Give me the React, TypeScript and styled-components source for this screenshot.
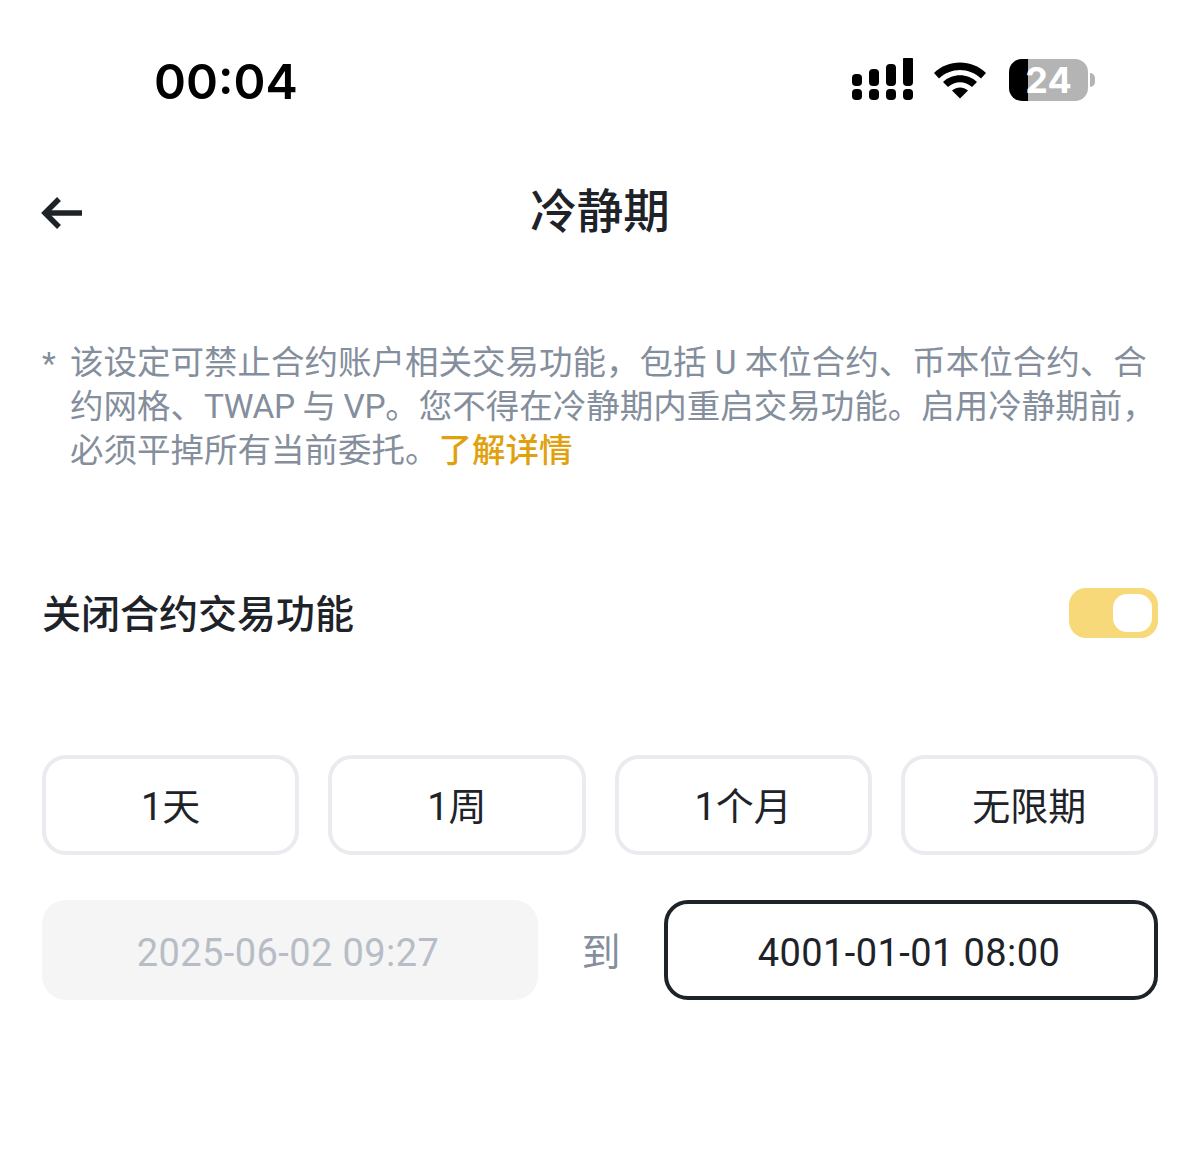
import React from "react";
import styled, { createGlobalStyle } from "styled-components";

const GlobalStyle = createGlobalStyle`
  html, body {
    margin: 0;
    padding: 0;
    background: #fff;
  }
  body {
    font-family: "Roboto", "Noto Sans CJK SC", sans-serif;
    color: #1e2329;
  }
`;

const periods = ["1天", "1周", "1个月", "无限期"];

function SignalIcon() {
  const heights = [12, 17, 22, 30];
  return (
    <svg width="62" height="44" viewBox="0 0 62 44" fill="#000">
      {heights.map((h, i) => (
        <rect key={i} x={1 + i * 17} y={28 - h} width="10" height={h} rx="4" />
      ))}
      {heights.map((_, i) => (
        <rect key={i} x={1 + i * 17} y="31" width="10" height="11" rx="4" />
      ))}
    </svg>
  );
}

function WifiIcon() {
  return (
    <svg width="54" height="40" viewBox="0 0 54 40" fill="#000">
      <path d="M1 13 C15 -1 39 -1 53 13 L48 18.500 C36 7 18 7 6 18.500 Z" />
      <path d="M10 22 C19 13 35 13 44 22 L39 27 C32 20.500 22 20.500 15 27 Z" />
      <path d="M19 30.500 C24 26.500 30 26.500 35 30.500 L27 38.500 Z" />
    </svg>
  );
}

export default function App() {
  return (
    <Page>
      <GlobalStyle />
      <StatusBar>
        <Clock>00:04</Clock>
        <StatusIcons>
          <SignalIcon />
          <WifiIcon />
          <Battery>
            <BatteryBody>
              <BatteryLevel>24</BatteryLevel>
            </BatteryBody>
            <BatteryCap />
          </Battery>
        </StatusIcons>
      </StatusBar>

      <Header>
        <BackButton>
          <svg width="44" height="36" viewBox="0 0 44 36" fill="none" stroke="#1e2329" strokeWidth="5.500">
            <path d="M42 18 H6" />
            <path d="M19 4 L5 18 L19 32" />
          </svg>
        </BackButton>
        <Title>冷静期</Title>
      </Header>

      <Notice>
        <Star>*</Star>
        <NoticeText>
          该设定可禁止合约账户相关交易功能，包括 U 本位合约、币本位合约、合约网格、<Latin>TWAP 与 VP</Latin>。您不得在冷静期内重启交易功能。启用冷静期前，必须平掉所有当前委托。
          <LearnMore>了解详情</LearnMore>
        </NoticeText>
      </Notice>

      <ToggleRow>
        <ToggleLabel>关闭合约交易功能</ToggleLabel>
        <Toggle>
          <ToggleKnob />
        </Toggle>
      </ToggleRow>

      <PeriodRow>
        {periods.map((p) => (
          <PeriodButton key={p}>{p}</PeriodButton>
        ))}
      </PeriodRow>

      <DateRow>
        <DateBox $disabled>2025-06-02 09:27</DateBox>
        <DateTo>到</DateTo>
        <DateBox>4001-01-01 08:00</DateBox>
      </DateRow>
    </Page>
  );
}

const Page = styled.div`
  width: 1200px;
  height: 1156px;
  overflow: hidden;
  background: #fff;
`;

const StatusBar = styled.div`
  height: 162px;
  display: flex;
  justify-content: space-between;
  align-items: flex-start;
  padding: 53px 105px 0 154px;
  box-sizing: border-box;
`;

const Clock = styled.div`
  font-family: "Inter", sans-serif;
  font-size: 48.500px;
  line-height: 58px;
  font-weight: 600;
  color: #000;
`;

const StatusIcons = styled.div`
  display: flex;
  align-items: center;
  gap: 20px;
  margin-top: 5px;
`;

const Battery = styled.div`
  display: flex;
  align-items: center;
  gap: 2px;
  margin-left: 2px;
`;

const BatteryBody = styled.div`
  width: 79px;
  height: 42px;
  border-radius: 13px;
  overflow: hidden;
  background: linear-gradient(to right, #000 0 24%, #b4b4b4 24% 100%);
  display: flex;
  align-items: center;
  justify-content: center;
`;

const BatteryLevel = styled.span`
  font-family: "Inter", sans-serif;
  font-size: 36px;
  line-height: 42px;
  font-weight: 700;
  color: #fff;
`;

const BatteryCap = styled.div`
  width: 5px;
  height: 14px;
  border-radius: 0 5px 5px 0;
  background: #b4b4b4;
`;

const Header = styled.div`
  height: 100px;
  position: relative;
  display: flex;
  align-items: center;
  justify-content: center;
`;

const BackButton = styled.div`
  position: absolute;
  left: 40px;
  top: 33px;
  line-height: 0;
`;

const Title = styled.h1`
  margin: 0 0 9px;
  font-family: "Noto Sans CJK SC", sans-serif;
  font-size: 46.500px;
  line-height: 60px;
  font-weight: 500;
  color: #1e2329;
`;

const Notice = styled.div`
  display: flex;
  padding: 79px 30px 0 42px;
  gap: 14px;
`;

const Star = styled.span`
  font-size: 32px;
  line-height: 44px;
  color: #848e9c;
  width: 14px;
  flex: none;
`;

const NoticeText = styled.p`
  margin: 0;
  font-family: "Roboto", "Noto Sans CJK SC", sans-serif;
  font-size: 33.500px;
  line-height: 44px;
  font-weight: 400;
  color: #848e9c;
`;

const Latin = styled.span`
  letter-spacing: -0.400px;
`;

const LearnMore = styled.span`
  color: #dfa20e;
  font-weight: 500;
`;

const ToggleRow = styled.div`
  display: flex;
  justify-content: space-between;
  align-items: center;
  padding: 0 42px;
  margin-top: 115px;
  height: 50px;
`;

const ToggleLabel = styled.span`
  font-family: "Noto Sans CJK SC", sans-serif;
  font-size: 39px;
  line-height: 46px;
  font-weight: 500;
  color: #1e2329;
  margin-bottom: 4px;
`;

const Toggle = styled.div`
  width: 89px;
  height: 50px;
  box-sizing: border-box;
  padding: 6px;
  border-radius: 17px;
  background: #f8d97a;
  display: flex;
  justify-content: flex-end;
`;

const ToggleKnob = styled.div`
  width: 39px;
  height: 38px;
  border-radius: 14px;
  background: #fff;
`;

const PeriodRow = styled.div`
  display: grid;
  grid-template-columns: repeat(4, 1fr);
  gap: 29px;
  padding: 0 42px;
  margin-top: 117px;
`;

const PeriodButton = styled.div`
  height: 100px;
  box-sizing: border-box;
  border: 4px solid #e9ebef;
  border-radius: 24px;
  padding-bottom: 4px;
  display: flex;
  align-items: center;
  justify-content: center;
  font-size: 38px;
  font-weight: 400;
  color: #1e2329;
`;

const DateRow = styled.div`
  display: flex;
  align-items: center;
  padding: 0 42px;
  margin-top: 45px;
`;

const DateBox = styled.div<{ $disabled?: boolean }>`
  width: ${(p) => (p.$disabled ? "496px" : "494px")};
  height: 100px;
  box-sizing: border-box;
  border-radius: 24px;
  padding: 6px 4px 0 0;
  display: flex;
  align-items: center;
  justify-content: center;
  font-family: "Roboto", sans-serif;
  font-size: 38px;
  letter-spacing: 0.400px;
  color: ${(p) => (p.$disabled ? "#b7bdc6" : "#1e2329")};
  background: ${(p) => (p.$disabled ? "#f5f5f5" : "#fff")};
  border: ${(p) => (p.$disabled ? "none" : "4px solid #1e2329")};
`;

const DateTo = styled.span`
  flex: 1;
  padding-bottom: 2px;
  text-align: center;
  font-family: "Noto Sans CJK SC", sans-serif;
  font-size: 39px;
  font-weight: 400;
  color: #848e9c;
`;
